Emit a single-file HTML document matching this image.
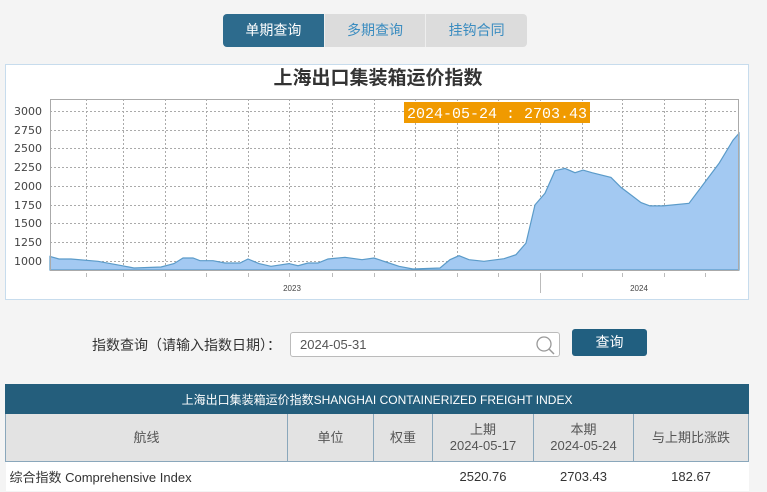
<!DOCTYPE html><html><head><meta charset="utf-8"><style>
body{margin:0;width:767px;height:492px;background:#f4f4f4;font-family:"Liberation Sans","Noto Sans CJK SC",sans-serif;position:relative;overflow:hidden}
.tabs{position:absolute;left:223px;top:14px;width:304px;height:33px;border-radius:4px;overflow:hidden;background:#dcdcdc;display:flex;font-size:14px}
.tabs div{width:101px;text-align:center;line-height:33px;color:#3a8cc0}
.tabs .a{background:#2d6b8d;color:#fff}
.tabs .m{border-left:1px solid #eee;border-right:1px solid #eee}
.chart{position:absolute;left:5px;top:64px;width:742px;height:234px;background:#fff;border:1px solid #c7dced}
.lbl{position:absolute;left:92px;top:335px;font-size:14px;color:#333}
.inp{position:absolute;left:290px;top:332px;width:268px;height:23px;border:1px solid #bbb;border-radius:3px;background:#fff;font-size:13px;color:#555;line-height:23px;text-indent:9px}
.btn{position:absolute;left:572px;top:329px;width:75px;height:27px;background:#215f80;border-radius:3px;color:#fff;font-size:14px;text-align:center;line-height:27px}
table{position:absolute;left:5px;top:384px;width:743px;border-collapse:collapse;table-layout:fixed;font-size:13px;color:#333}
th.h{background:#245e7c;color:#fff;font-weight:normal;height:28px;padding:0;font-size:12px;border:1px solid #245e7c}
.c td{background:#e3e3e3;text-align:center;height:47px;padding:0;border:1px solid #8aa7bb;color:#555;line-height:16px}
.d td{background:#fff;height:29px;padding:0;text-align:center}
</style></head><body>
<div class="tabs"><div class="a">单期查询</div><div class="m">多期查询</div><div>挂钩合同</div></div>
<div class="chart"></div>
<svg style="position:absolute;left:0;top:0" width="767" height="300">
<text x="378" y="84" text-anchor="middle" font-size="19" font-weight="bold" fill="#333" font-family="Liberation Sans,Noto Sans CJK SC,sans-serif">上海出口集装箱运价指数</text>
<g stroke="#aaa" stroke-dasharray="2,2" stroke-width="1">
<line x1="50" x2="739" y1="111.5" y2="111.5"/><line x1="50" x2="739" y1="130.5" y2="130.5"/><line x1="50" x2="739" y1="148.5" y2="148.5"/><line x1="50" x2="739" y1="167.5" y2="167.5"/><line x1="50" x2="739" y1="186.5" y2="186.5"/><line x1="50" x2="739" y1="205.5" y2="205.5"/><line x1="50" x2="739" y1="223.5" y2="223.5"/><line x1="50" x2="739" y1="242.5" y2="242.5"/><line x1="50" x2="739" y1="261.5" y2="261.5"/>
<line x1="86.5" x2="86.5" y1="99" y2="270"/><line x1="123.5" x2="123.5" y1="99" y2="270"/><line x1="165.5" x2="165.5" y1="99" y2="270"/><line x1="206.5" x2="206.5" y1="99" y2="270"/><line x1="248.5" x2="248.5" y1="99" y2="270"/><line x1="289.5" x2="289.5" y1="99" y2="270"/><line x1="332.5" x2="332.5" y1="99" y2="270"/><line x1="374.5" x2="374.5" y1="99" y2="270"/><line x1="415.5" x2="415.5" y1="99" y2="270"/><line x1="457.5" x2="457.5" y1="99" y2="270"/><line x1="498.5" x2="498.5" y1="99" y2="270"/><line x1="540.5" x2="540.5" y1="99" y2="270"/><line x1="582.5" x2="582.5" y1="99" y2="270"/><line x1="622.5" x2="622.5" y1="99" y2="270"/><line x1="664.5" x2="664.5" y1="99" y2="270"/><line x1="705.5" x2="705.5" y1="99" y2="270"/>
</g>
<polygon fill="#a3c9f2" stroke="#5b9bc9" stroke-width="1.2" points="50,256.4 59,259 71,259 98,261.3 122,265.7 134,268 161,267 174,263.6 183,258 193,258 200,260.7 213,260.7 225,263 240,263 248,259 259,263.6 271,266.3 289,263.6 298,265.7 308,263 318,263 328,259 345,257.3 362,259.7 374,258 386,262 399,266.3 413,269 440,268 450,259.7 459,255.7 469,259.7 484,261.3 504,258.7 516,254.7 526,243.1 535,204.9 545,193.3 555,170.7 565,168.4 575,172.7 583,170.1 592,172.7 611,177.4 621,187.4 641,202.6 650,205.9 663,205.9 689,203.3 704,183.4 719,163.4 733,140.2 739,133.3 739,270 50,270"/>
<rect x="50.5" y="99.5" width="688" height="171" fill="none" stroke="#aaa"/>
<g font-size="11" fill="#444" text-anchor="end" font-family="DejaVu Sans,sans-serif">
<text x="42" y="115">3000</text><text x="42" y="134">2750</text><text x="42" y="152">2500</text><text x="42" y="171">2250</text><text x="42" y="190">2000</text><text x="42" y="209">1750</text><text x="42" y="227">1500</text><text x="42" y="246">1250</text><text x="42" y="265">1000</text></g>
<g stroke="#bbb"><line x1="86.5" x2="86.5" y1="273" y2="277"/><line x1="123.5" x2="123.5" y1="273" y2="277"/><line x1="165.5" x2="165.5" y1="273" y2="277"/><line x1="206.5" x2="206.5" y1="273" y2="277"/><line x1="248.5" x2="248.5" y1="273" y2="277"/><line x1="289.5" x2="289.5" y1="273" y2="277"/><line x1="332.5" x2="332.5" y1="273" y2="277"/><line x1="374.5" x2="374.5" y1="273" y2="277"/><line x1="415.5" x2="415.5" y1="273" y2="277"/><line x1="457.5" x2="457.5" y1="273" y2="277"/><line x1="498.5" x2="498.5" y1="273" y2="277"/><line x1="540.5" x2="540.5" y1="273" y2="293"/><line x1="582.5" x2="582.5" y1="273" y2="277"/><line x1="622.5" x2="622.5" y1="273" y2="277"/><line x1="664.5" x2="664.5" y1="273" y2="277"/><line x1="705.5" x2="705.5" y1="273" y2="277"/></g>
<text x="292" y="291" font-size="8" fill="#444" text-anchor="middle">2023</text>
<text x="639" y="291" font-size="8" fill="#444" text-anchor="middle">2024</text>
<rect x="404" y="102" width="186" height="21" fill="#f09a00"/>
<text x="497" y="118" text-anchor="middle" font-size="15" fill="#fff" font-family="Liberation Mono,monospace">2024-05-24 : 2703.43</text>
</svg>
<div class="lbl">指数查询（请输入指数日期）：</div>
<div class="inp">2024-05-31<svg style="position:absolute;right:2px;top:2px" width="22" height="20"><circle cx="9" cy="9" r="7" fill="none" stroke="#999" stroke-width="1.3"/><line x1="14" y1="14" x2="19" y2="19" stroke="#999" stroke-width="1.5"/></svg></div>
<div class="btn">查询</div>
<table>
<colgroup><col style="width:282px"><col style="width:86px"><col style="width:59px"><col style="width:101px"><col style="width:100px"><col style="width:115px"></colgroup>
<tr><th class="h" colspan="6">上海出口集装箱运价指数SHANGHAI CONTAINERIZED FREIGHT INDEX</th></tr>
<tr class="c"><td>航线</td><td>单位</td><td>权重</td><td>上期<br>2024-05-17</td><td>本期<br>2024-05-24</td><td>与上期比涨跌</td></tr>
<tr class="d"><td style="text-align:left;padding-left:4px">综合指数 Comprehensive Index</td><td></td><td></td><td>2520.76</td><td>2703.43</td><td>182.67</td></tr>
</table>
</body></html>
